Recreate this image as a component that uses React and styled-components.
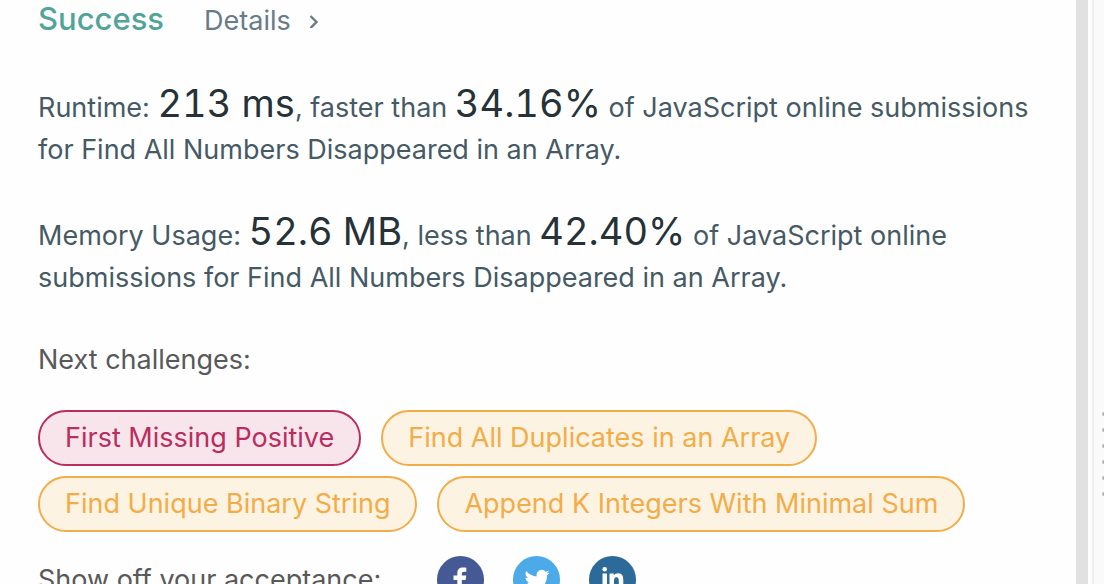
import React from "react";
import styled, { createGlobalStyle } from "styled-components";

const GlobalStyle = createGlobalStyle`
  * { box-sizing: border-box; }
  body {
    margin: 0;
    background: #fefefe;
    font-family: Inter, "Liberation Sans", sans-serif;
    font-size: 27px;
    line-height: 42px;
    color: #455a64;
  }
`;

const Shell = styled.div`
  display: flex;
  height: 100vh;
  overflow: hidden;
`;

const Result = styled.main`
  flex: 1;
  min-width: 0;
  padding: 0 38px;
`;

const Header = styled.header`
  display: flex;
  align-items: baseline;
  gap: 40px;
  line-height: 38px;
  margin-bottom: 47px;
`;

const Status = styled.h1`
  margin: 0;
  font-size: 31px;
  font-weight: 500;
  color: #52a499;
`;

const DetailsLink = styled.a`
  display: inline-flex;
  align-items: center;
  gap: 17px;
  color: #697b88;
  text-decoration: none;
`;

const Stat = styled.p`
  margin: 0 0 44px;
`;

const Figure = styled.strong`
  font-size: 38px;
  font-weight: 400;
  font-variant-numeric: tabular-nums;
  line-height: 30px;
  color: #263238;
`;

const Label = styled.h2`
  margin: 0;
  font-size: 27px;
  font-weight: 400;
  color: #595959;
`;

const NextLabel = styled(Label)`
  margin-top: -4px;
`;

const Challenges = styled.nav`
  display: flex;
  flex-wrap: wrap;
  gap: 10px 20px;
  margin: 29px 0 24px;
`;

const tones = {
  hard: { line: "#b92d60", fill: "#f8e5eb" },
  medium: { line: "#f2ac48", fill: "#fdf3e3" },
};

const Pill = styled.a`
  padding: 5px 25px;
  border: 2px solid ${(p) => tones[p.$tone].line};
  border-radius: 28px;
  background: ${(p) => tones[p.$tone].fill};
  color: ${(p) => tones[p.$tone].line};
  text-decoration: none;
  white-space: nowrap;
`;

const ShareRow = styled.div`
  display: flex;
  align-items: center;
  gap: 29px;
`;

const ShareLabel = styled(Label)`
  margin-right: 27px;
`;

const Share = styled.button`
  width: 47px;
  height: 47px;
  padding: 0;
  border: 0;
  border-radius: 50%;
  background: ${(p) => p.$color};
  color: #fff;
  svg { display: block; }
`;

const Scrollbar = styled.div`
  width: 12px;
  background: #e1e1e1;
`;

const Splitter = styled.div`
  display: flex;
  flex-direction: column;
  align-items: flex-end;
  width: 12px;
  margin-left: 4px;
  padding-top: 412px;
  gap: 12px;
  border-left: 2px solid #eee;
  background: #fafafa;
  overflow: hidden;
`;

const Grip = styled.span`
  flex: none;
  width: 4px;
  height: 4px;
  margin-right: -2px;
  border-radius: 50%;
  background: #a9b5ba;
`;

const challenges = [
  ["First Missing Positive", "hard"],
  ["Find All Duplicates in an Array", "medium"],
  ["Find Unique Binary String", "medium"],
  ["Append K Integers With Minimal Sum", "medium"],
];

const networks = [
  {
    name: "Facebook",
    color: "#455a94",
    art: <path d="M20.300 36V24h-3.800v-4.500h3.800v-2.300c0-3.700 2-5.700 5.600-5.700 1.500 0 2.700.1 3.400.3v3.900h-2.200c-1.700 0-2.300.8-2.300 2v1.800h4.500l-.7 4.500h-3.800v12z" />,
  },
  {
    name: "Twitter",
    color: "#4daae9",
    art: <path d="M36.500 16.600c-.9.400-1.900.7-2.900.8 1-.6 1.900-1.600 2.200-2.800-1 .6-2.100 1-3.200 1.200a5.100 5.100 0 0 0-8.800 4.700c-4.300-.2-8-2.200-10.600-5.400a5.200 5.200 0 0 0 1.600 6.900c-.8 0-1.600-.3-2.300-.6 0 2.500 1.700 4.500 4.100 5-.7.200-1.500.2-2.300.1.600 2 2.500 3.500 4.800 3.600a10.300 10.300 0 0 1-7.600 2.100A14.600 14.600 0 0 0 34 19.200c1-.7 1.900-1.600 2.500-2.600z" />,
  },
  {
    name: "LinkedIn",
    color: "#2b6a99",
    art: (
      <>
        <circle cx="15.700" cy="13.200" r="2.300" />
        <path d="M13.500 17.500h4.500v16h-4.500zM20.500 17.500h4.300v2c.9-1.400 2.300-2.300 4.300-2.300 4.300 0 5.200 2.900 5.200 7v9.300h-4.500V25.600c0-2-.2-4.300-2.300-4.300-2.100 0-2.500 1.900-2.500 4v8.200h-4.500z" />
      </>
    ),
  },
];

export default function App() {
  return (
    <>
      <GlobalStyle />
      <Shell>
        <Result>
          <Header>
            <Status>Success</Status>
            <DetailsLink href="#details">
              Details
              <svg width="11" height="14" viewBox="0 0 11 14" fill="none" stroke="currentColor" strokeWidth="2.400" aria-hidden="true">
                <path d="M2.500 2 8.500 8l-6 6" />
              </svg>
            </DetailsLink>
          </Header>
          <Stat>
            Runtime: <Figure>213 ms</Figure>, faster than <Figure>34.16%</Figure> of JavaScript online
            submissions for Find All Numbers Disappeared in an Array.
          </Stat>
          <Stat>
            Memory Usage: <Figure>52.6 MB</Figure>, less than <Figure>42.40%</Figure> of JavaScript online
            submissions for Find All Numbers Disappeared in an Array.
          </Stat>
          <NextLabel>Next challenges:</NextLabel>
          <Challenges aria-label="Next challenges">
            {challenges.map(([title, tone]) => (
              <Pill key={title} href="#problem" $tone={tone}>{title}</Pill>
            ))}
          </Challenges>
          <ShareRow>
            <ShareLabel>Show off your acceptance:</ShareLabel>
            {networks.map((n) => (
              <Share key={n.name} type="button" aria-label={n.name} $color={n.color}>
                <svg width="47" height="47" viewBox="0 0 47 47" fill="currentColor" aria-hidden="true">{n.art}</svg>
              </Share>
            ))}
          </ShareRow>
        </Result>
        <Scrollbar />
        <Splitter>
          {[0, 1, 2, 3, 4, 5].map((i) => <Grip key={i} />)}
        </Splitter>
      </Shell>
    </>
  );
}
